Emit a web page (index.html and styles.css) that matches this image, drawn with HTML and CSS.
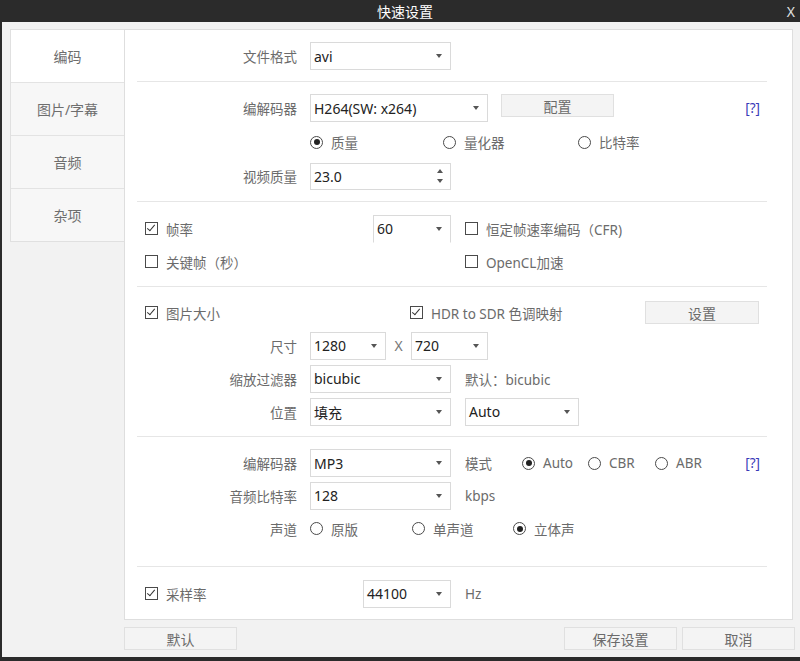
FILE: index.html
```html
<!DOCTYPE html>
<html lang="zh-CN">
<head>
    <meta charset="UTF-8">
    <title>快速设置</title>
    <link rel="stylesheet" href="styles.css">
</head>
<body>

    <div class="titlebar">
        <span class="title">快速设置</span>
        <span class="close">X</span>
    </div>

    <div class="window">
        <div class="main">
            <!-- Tabs -->
            <div class="tabs">
                <div class="tab active">编码</div>
                <div class="tab">图片/字幕</div>
                <div class="tab">音频</div>
                <div class="tab">杂项</div>
            </div>

            <div class="content">
                <!-- File format -->
                <div class="section s1">
                    <div class="row h30">
                        <span class="lbl">文件格式</span>
                        <div class="select w141"><span class="val">avi</span><span class="arrow"></span></div>
                    </div>
                </div>

                <!-- Video codec -->
                <div class="section s2">
                    <div class="row h34">
                        <span class="lbl">编解码器</span>
                        <div class="select w178"><span class="val">H264(SW: x264)</span><span class="arrow"></span></div>
                        <button class="btn btn-config">配置</button>
                        <span class="help">[?]</span>
                    </div>
                    <div class="row h34">
                        <span class="lbl"></span>
                        <label class="radio w133"><span class="dot checked"></span>质量</label>
                        <label class="radio w135"><span class="dot"></span>量化器</label>
                        <label class="radio"><span class="dot"></span>比特率</label>
                    </div>
                    <div class="row h34">
                        <span class="lbl">视频质量</span>
                        <div class="select spin w141">
                            <span class="val">23.0</span>
                            <span class="spin-arrows"><span class="up"></span><span class="down"></span></span>
                        </div>
                    </div>
                </div>

                <!-- Frame rate -->
                <div class="section s3">
                    <div class="row h33 indent">
                        <label class="check w228"><span class="box checked"></span>帧率</label>
                        <div class="select w78 clipped"><span class="val">60</span><span class="arrow"></span></div>
                        <label class="check ml14"><span class="box"></span>恒定帧速率编码（CFR)</label>
                    </div>
                    <div class="row h33 indent">
                        <label class="check w320"><span class="box"></span>关键帧（秒）</label>
                        <label class="check"><span class="box"></span>OpenCL加速</label>
                    </div>
                </div>

                <!-- Picture size -->
                <div class="section s4">
                    <div class="row h33 indent">
                        <label class="check w265"><span class="box checked"></span>图片大小</label>
                        <label class="check w235"><span class="box checked"></span>HDR to SDR 色调映射</label>
                        <button class="btn btn-set">设置</button>
                    </div>
                    <div class="row h33">
                        <span class="lbl">尺寸</span>
                        <div class="select w76"><span class="val">1280</span><span class="arrow"></span></div>
                        <span class="times">X</span>
                        <div class="select w77"><span class="val">720</span><span class="arrow"></span></div>
                    </div>
                    <div class="row h33">
                        <span class="lbl">缩放过滤器</span>
                        <div class="select w141"><span class="val">bicubic</span><span class="arrow"></span></div>
                        <span class="note ml14">默认：bicubic</span>
                    </div>
                    <div class="row h33">
                        <span class="lbl">位置</span>
                        <div class="select w141"><span class="val">填充</span><span class="arrow"></span></div>
                        <div class="select w114 ml14"><span class="val">Auto</span><span class="arrow"></span></div>
                    </div>
                </div>

                <!-- Audio -->
                <div class="section s5">
                    <div class="row h32">
                        <span class="lbl">编解码器</span>
                        <div class="select w141"><span class="val">MP3</span><span class="arrow"></span></div>
                        <span class="note ml14 w57">模式</span>
                        <label class="radio w66"><span class="dot checked"></span>Auto</label>
                        <label class="radio w67"><span class="dot"></span>CBR</label>
                        <label class="radio"><span class="dot"></span>ABR</label>
                        <span class="help">[?]</span>
                    </div>
                    <div class="row h33">
                        <span class="lbl">音频比特率</span>
                        <div class="select w141"><span class="val">128</span><span class="arrow"></span></div>
                        <span class="note ml14">kbps</span>
                    </div>
                    <div class="row h33">
                        <span class="lbl">声道</span>
                        <label class="radio w102"><span class="dot"></span>原版</label>
                        <label class="radio w101"><span class="dot"></span>单声道</label>
                        <label class="radio"><span class="dot checked"></span>立体声</label>
                    </div>
                </div>

                <!-- Sample rate -->
                <div class="section s6">
                    <div class="row h33 indent">
                        <label class="check w218"><span class="box checked"></span>采样率</label>
                        <div class="select w88"><span class="val">44100</span><span class="arrow"></span></div>
                        <span class="note ml14">Hz</span>
                    </div>
                </div>
            </div>
        </div>

        <div class="footer">
            <button class="btn btn-foot">默认</button>
            <div class="footer-right">
                <button class="btn btn-foot">保存设置</button>
                <button class="btn btn-foot">取消</button>
            </div>
        </div>
    </div>

</body>
</html>
```

FILE: styles.css
```css
html {
    background-color: #2b2b2b;
}

body {
    margin: 0;
    width: 800px;
    height: 661px;
    font-family: "Noto Sans", "Noto Sans CJK SC", sans-serif;
    font-size: 13.5px;
    color: #6b6b6b;
    overflow: hidden;
}

/* Title bar */
.titlebar {
    height: 22px;
    display: flex;
    align-items: center;
    justify-content: center;
    position: relative;
    color: #ffffff;
    font-size: 14px;
}

.titlebar .title {
    margin-left: 10px;
    margin-top: -1px;
}

.titlebar .close {
    position: absolute;
    right: 5px;
    top: 2px;
    color: #e0e0e0;
    font-size: 14px;
}

/* Window body */
.window {
    height: 635px;
    box-sizing: border-box;
    border-left: 2px solid #2b2b2b;
    background-color: #f2f2f2;
    padding: 7px 7px 0 8px;
}

.main {
    display: flex;
    align-items: flex-start;
}

.tabs {
    width: 114px;
    border: 1px solid #e0e0e0;
    border-right: none;
    box-sizing: border-box;
}

.tab {
    height: 52px;
    border-bottom: 1px solid #e3e3e3;
    background-color: #f7f7f7;
    display: flex;
    align-items: center;
    justify-content: center;
    font-size: 14px;
    color: #6e6e6e;
}

.tab:last-child {
    border-bottom: none;
}

.tab.active {
    background-color: #ffffff;
}

.content {
    flex: 1;
    height: 591px;
    box-sizing: border-box;
    background-color: #ffffff;
    border: 1px solid #dedede;
    padding: 0 25px 0 12px;
}

.section + .section {
    border-top: 1px solid #e6e6e6;
}

.s1 { padding: 11px 0 10px; }
.s2 { padding: 9px 0 8px; }
.s3 { padding: 10px 0 8px; }
.s4 { padding: 9px 0 8px; }
.s5 { padding: 10px 0 21px; }
.s6 { padding: 10px 0 0; }

/* Rows */
.row {
    display: flex;
    align-items: center;
}

.row.indent {
    padding-left: 8px;
}

.h30 { height: 30px; }
.h32 { height: 32px; }
.h33 { height: 33px; }
.h34 { height: 34px; }

.lbl {
    width: 173px;
    box-sizing: border-box;
    padding-right: 13px;
    text-align: right;
    flex-shrink: 0;
}

/* Select boxes */
.select {
    height: 28px;
    box-sizing: border-box;
    border: 1px solid #dadada;
    display: flex;
    align-items: center;
    padding: 0 8px 0 3px;
    color: #222222;
    font-size: 14px;
    flex-shrink: 0;
}

.select .val {
    flex: 1;
    white-space: nowrap;
}

.select .arrow {
    width: 0;
    height: 0;
    border-left: 3.5px solid transparent;
    border-right: 3.5px solid transparent;
    border-top: 4px solid #555555;
}

.select.clipped {
    border-bottom-color: transparent;
}

.spin {
    height: 27px;
    padding-right: 7px;
}

.spin-arrows {
    display: flex;
    flex-direction: column;
    gap: 6px;
}

.spin-arrows .up {
    border-left: 3.5px solid transparent;
    border-right: 3.5px solid transparent;
    border-bottom: 4px solid #555555;
}

.spin-arrows .down {
    border-left: 3.5px solid transparent;
    border-right: 3.5px solid transparent;
    border-top: 4px solid #555555;
}

.w57 { width: 57px; }
.w66 { width: 66px; }
.w67 { width: 67px; }
.w76 { width: 76px; }
.w77 { width: 77px; }
.w78 { width: 78px; }
.w88 { width: 88px; }
.w101 { width: 101px; }
.w102 { width: 102px; }
.w114 { width: 114px; }
.w133 { width: 133px; }
.w135 { width: 135px; }
.w141 { width: 141px; }
.w178 { width: 178px; }
.w218 { width: 218px; }
.w228 { width: 228px; }
.w235 { width: 235px; }
.w265 { width: 265px; }
.w320 { width: 320px; }

.ml14 { margin-left: 14px; }

.times {
    width: 25px;
    text-align: center;
    color: #777777;
    font-size: 14px;
}

.note {
    flex-shrink: 0;
    white-space: nowrap;
}

.help {
    margin-left: auto;
    margin-right: 7px;
    color: #3a3ab8;
    font-size: 13.5px;
}

/* Radios and checkboxes */
.radio, .check {
    display: flex;
    align-items: center;
    white-space: nowrap;
    flex-shrink: 0;
}

.dot {
    width: 13px;
    height: 13px;
    box-sizing: border-box;
    border: 1px solid #4a4a4a;
    border-radius: 50%;
    margin-right: 8px;
    display: flex;
    align-items: center;
    justify-content: center;
}

.dot.checked::after {
    content: "";
    width: 6px;
    height: 6px;
    border-radius: 50%;
    background-color: #222222;
}

.box {
    width: 13px;
    height: 13px;
    box-sizing: border-box;
    border: 1px solid #4a4a4a;
    margin-right: 8px;
    position: relative;
}

.box.checked::after {
    content: "";
    position: absolute;
    left: 3px;
    top: 0px;
    width: 3px;
    height: 7px;
    border-right: 1.5px solid #333333;
    border-bottom: 1.5px solid #333333;
    transform: rotate(40deg);
}

/* Buttons */
.btn {
    height: 23px;
    box-sizing: border-box;
    background-color: #f4f4f4;
    border: 1px solid #e0e0e0;
    font-family: inherit;
    font-size: 14px;
    color: #6b6b6b;
    padding: 0;
    flex-shrink: 0;
}

.btn-config {
    width: 113px;
    margin-left: 13px;
    align-self: flex-start;
    margin-top: 3px;
}

.btn-set {
    width: 114px;
}

/* Footer */
.footer {
    display: flex;
    justify-content: space-between;
    margin: 7px -2px 0 114px;
}

.footer-right {
    display: flex;
    gap: 5px;
}

.btn-foot {
    width: 113px;
    height: 23px;
}
```
